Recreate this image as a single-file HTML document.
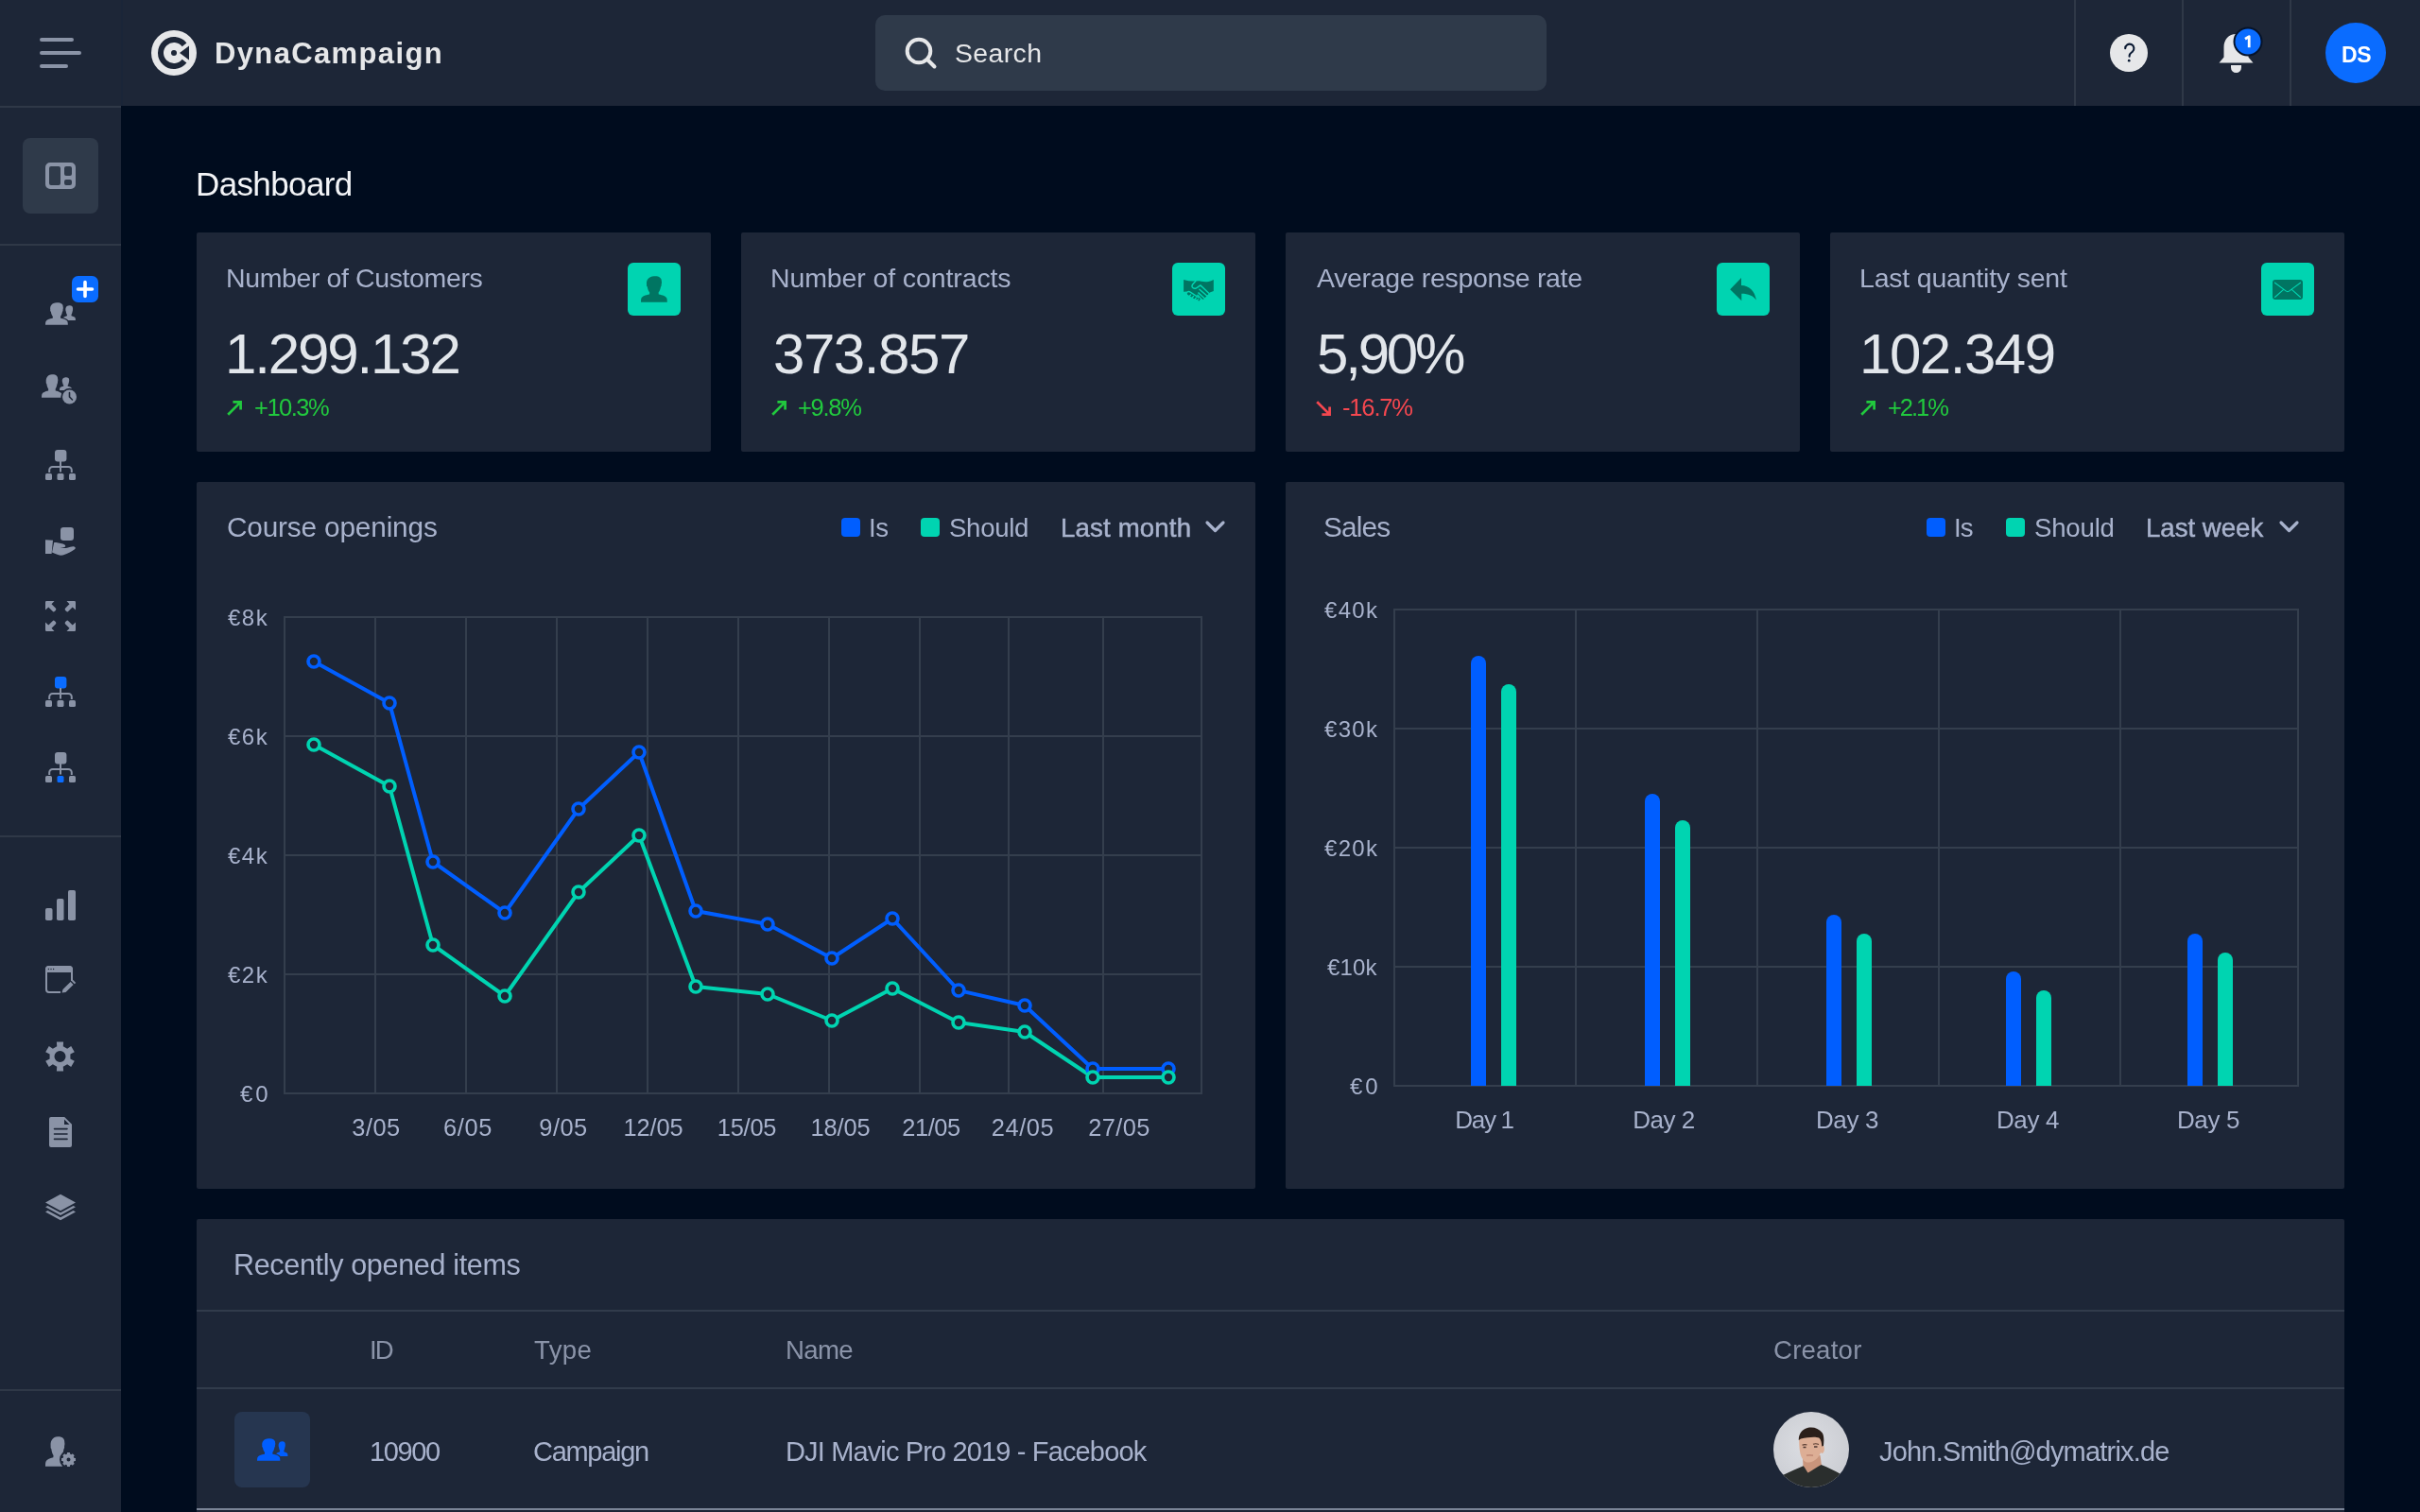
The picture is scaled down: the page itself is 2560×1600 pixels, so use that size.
<!DOCTYPE html>
<html><head><meta charset="utf-8">
<style>
*{margin:0;padding:0;box-sizing:border-box}
html,body{width:2560px;height:1600px;overflow:hidden;background:#000C1E;font-family:"Liberation Sans",sans-serif}
.a{position:absolute}
.t{position:absolute;white-space:nowrap;line-height:1;will-change:transform}
#sidebar{left:0;top:0;width:128px;height:1600px;background:#1D2637}
#header{left:128px;top:0;width:2432px;height:112px;background:#1D2637}
.sep{position:absolute;background:#2F3847}
.card{position:absolute;background:#1D2637;border-radius:2px}
</style></head>
<body>
<!-- SIDEBAR -->
<div id="sidebar" class="a"></div>
<div class="a" style="left:128px;top:0;width:2px;height:112px;background:#1A2538"></div>
<div class="sep" style="left:0;top:112px;width:128px;height:2px"></div>
<div class="sep" style="left:0;top:258px;width:128px;height:2px"></div>
<div class="sep" style="left:0;top:884px;width:128px;height:2px"></div>
<div class="sep" style="left:0;top:1470px;width:128px;height:2px"></div>
<!-- hamburger -->
<div class="a" style="left:42px;top:40px;width:36px;height:4px;border-radius:2px;background:#8A93A6"></div>
<div class="a" style="left:42px;top:54px;width:44px;height:4px;border-radius:2px;background:#8A93A6"></div>
<div class="a" style="left:42px;top:68px;width:30px;height:4px;border-radius:2px;background:#8A93A6"></div>
<!-- active tile -->
<div class="a" style="left:24px;top:146px;width:80px;height:80px;border-radius:8px;background:#2F3A4A"></div>
<svg class="a" style="left:0;top:0" width="128" height="1600" viewBox="0 0 128 1600">
  <g fill="#8A93A6">
    <!-- dashboard icon -->
    <path transform="translate(66.5,323.0) scale(0.4821,0.5714)" d="M14 0.3C19 0 22 2 21.8 5.5C22.2 6.5 22 8 21.6 9C21.8 10 21.6 11 21 11.5C20.5 14.5 19.5 16.5 18.6 17.5L18.8 19.5C23 20.3 26.5 21.5 27.3 23.5C27.7 24.5 27.8 26 27.8 27.8H0C0 26 .1 24.5 .5 23.5C1.3 21.5 4.8 20.3 9 19.5L9.2 17.5C8.3 16.5 7.2 14.5 6.8 11.5C6.1 11 5.8 10 6.1 9C5.8 7.5 6 5 7.2 3.5C8.5 1.5 11 .5 14 .3Z"/><path stroke="#1D2637" stroke-width="2.6" paint-order="stroke" transform="translate(48.0,320.0) scale(0.8571,0.8571)" d="M14 0.3C19 0 22 2 21.8 5.5C22.2 6.5 22 8 21.6 9C21.8 10 21.6 11 21 11.5C20.5 14.5 19.5 16.5 18.6 17.5L18.8 19.5C23 20.3 26.5 21.5 27.3 23.5C27.7 24.5 27.8 26 27.8 27.8H0C0 26 .1 24.5 .5 23.5C1.3 21.5 4.8 20.3 9 19.5L9.2 17.5C8.3 16.5 7.2 14.5 6.8 11.5C6.1 11 5.8 10 6.1 9C5.8 7.5 6 5 7.2 3.5C8.5 1.5 11 .5 14 .3Z"/><rect x="75" y="291" width="30" height="30" rx="7.5" fill="#1D2637"/><rect x="76" y="292" width="28" height="28" rx="6.5" fill="#0A6CFF"/><path d="M90 298.5v15 M82.5 306h15" stroke="#fff" stroke-width="3.6" stroke-linecap="round"/><path transform="translate(63.0,399.0) scale(0.4643,0.5000)" d="M14 0.3C19 0 22 2 21.8 5.5C22.2 6.5 22 8 21.6 9C21.8 10 21.6 11 21 11.5C20.5 14.5 19.5 16.5 18.6 17.5L18.8 19.5C23 20.3 26.5 21.5 27.3 23.5C27.7 24.5 27.8 26 27.8 27.8H0C0 26 .1 24.5 .5 23.5C1.3 21.5 4.8 20.3 9 19.5L9.2 17.5C8.3 16.5 7.2 14.5 6.8 11.5C6.1 11 5.8 10 6.1 9C5.8 7.5 6 5 7.2 3.5C8.5 1.5 11 .5 14 .3Z"/><path stroke="#1D2637" stroke-width="2.6" paint-order="stroke" transform="translate(44.0,396.0) scale(0.7857,0.8929)" d="M14 0.3C19 0 22 2 21.8 5.5C22.2 6.5 22 8 21.6 9C21.8 10 21.6 11 21 11.5C20.5 14.5 19.5 16.5 18.6 17.5L18.8 19.5C23 20.3 26.5 21.5 27.3 23.5C27.7 24.5 27.8 26 27.8 27.8H0C0 26 .1 24.5 .5 23.5C1.3 21.5 4.8 20.3 9 19.5L9.2 17.5C8.3 16.5 7.2 14.5 6.8 11.5C6.1 11 5.8 10 6.1 9C5.8 7.5 6 5 7.2 3.5C8.5 1.5 11 .5 14 .3Z"/><circle cx="73.5" cy="420" r="9.2" fill="#1D2637"/><circle cx="73.5" cy="420" r="7.5" fill="#8A93A6"/><path d="M73.5 415.5v4.5l3 3" fill="none" stroke="#1D2637" stroke-width="1.6" stroke-linecap="round"/><rect x="58" y="476" width="12.4" height="12.5" rx="3" fill="#8A93A6"/><path d="M64 488 v11.5 M52.2 500 v-2.5 a3.5 3.5 0 0 1 3.5 -3.5 h16.6 a3.5 3.5 0 0 1 3.5 3.5 v2.5" fill="none" stroke="#8A93A6" stroke-width="2"/><rect x="48" y="501" width="7" height="7" rx="1.6"/><rect x="60.5" y="501" width="7" height="7" rx="1.6" fill="#8A93A6"/><rect x="73" y="501" width="7" height="7" rx="1.6"/><rect x="64" y="558" width="14" height="14" rx="3.2"/><path d="M48 571.2 L56 571.8 L54.6 586 L48 586z"/><path d="M57.2 574 C60 574 63.5 574.6 66.5 575.6 C70 576.7 70.3 579.2 67 579.3 L63.5 579.5 C66 580 68 580.2 71 579.7 C74 579 76.5 578 78.5 578.5 C80 579 80.2 580.2 79 581.3 C76 583.5 71 586.5 66.5 587.5 C63.5 588 60 587 55 584.5z"/><path transform="translate(48,636) scale(1,1)" d="M0 1.2 a1.2 1.2 0 0 1 1.2 -1.2 h8.3 l-3 3.3 4.3 4.3 a1.6 1.6 0 0 1 0 2.3 l-.9.9 a1.6 1.6 0 0 1 -2.3 0 l-4.300-4.300 -3.300 3z"/><path transform="translate(80,636) scale(-1,1)" d="M0 1.2 a1.2 1.2 0 0 1 1.2 -1.2 h8.3 l-3 3.3 4.3 4.3 a1.6 1.6 0 0 1 0 2.3 l-.9.9 a1.6 1.6 0 0 1 -2.3 0 l-4.300-4.300 -3.300 3z"/><path transform="translate(48,668) scale(1,-1)" d="M0 1.2 a1.2 1.2 0 0 1 1.2 -1.2 h8.3 l-3 3.3 4.3 4.3 a1.6 1.6 0 0 1 0 2.3 l-.9.9 a1.6 1.6 0 0 1 -2.3 0 l-4.300-4.300 -3.300 3z"/><path transform="translate(80,668) scale(-1,-1)" d="M0 1.2 a1.2 1.2 0 0 1 1.2 -1.2 h8.3 l-3 3.3 4.3 4.3 a1.6 1.6 0 0 1 0 2.3 l-.9.9 a1.6 1.6 0 0 1 -2.3 0 l-4.300-4.300 -3.300 3z"/><rect x="58" y="716" width="12.4" height="12.5" rx="3" fill="#0A6CFF"/><path d="M64 728 v11.5 M52.2 740 v-2.5 a3.5 3.5 0 0 1 3.5 -3.5 h16.6 a3.5 3.5 0 0 1 3.5 3.5 v2.5" fill="none" stroke="#8A93A6" stroke-width="2"/><rect x="48" y="741" width="7" height="7" rx="1.6"/><rect x="60.5" y="741" width="7" height="7" rx="1.6" fill="#8A93A6"/><rect x="73" y="741" width="7" height="7" rx="1.6"/><rect x="58" y="796" width="12.4" height="12.5" rx="3" fill="#8A93A6"/><path d="M64 808 v11.5 M52.2 820 v-2.5 a3.5 3.5 0 0 1 3.5 -3.5 h16.6 a3.5 3.5 0 0 1 3.5 3.5 v2.5" fill="none" stroke="#8A93A6" stroke-width="2"/><rect x="48" y="821" width="7" height="7" rx="1.6"/><rect x="60.5" y="821" width="7" height="7" rx="1.6" fill="#0A6CFF"/><rect x="73" y="821" width="7" height="7" rx="1.6"/><rect x="48" y="961" width="7.5" height="13" rx="1.8"/><rect x="60" y="951" width="7.5" height="23" rx="1.8"/><rect x="72" y="942" width="8" height="32" rx="1.8"/><path d="M64 1050 H52 a3 3 0 0 1 -3 -3 V1026 a3 3 0 0 1 3 -3 H73 a3 3 0 0 1 3 3 V1038" fill="none" stroke="#8A93A6" stroke-width="2"/><path d="M48 1029 V1026 a4 4 0 0 1 4 -4 H73 a4 4 0 0 1 4 4 V1029z"/><circle cx="51.4" cy="1025.5" r=".7" fill="#1D2637"/><circle cx="54" cy="1025.5" r=".7" fill="#1D2637"/><circle cx="56.6" cy="1025.5" r=".7" fill="#1D2637"/><path d="M65.5 1050.5 L66.5 1047 L74.600 1039 L77.600 1042 L69.500 1050 Z M75.600 1038 L77 1036.800 L80.200 1040 L78.800 1041.200 Z"/><path fill-rule="evenodd" d="M59.90 1102.41 L67.10 1102.41 L66.77 1107.29 L71.14 1109.81 L75.20 1107.09 L78.80 1113.32 L74.41 1115.48 L74.41 1120.52 L78.80 1122.68 L75.20 1128.91 L71.14 1126.19 L66.77 1128.71 L67.10 1133.59 L59.90 1133.59 L60.23 1128.71 L55.86 1126.19 L51.80 1128.91 L48.20 1122.68 L52.59 1120.52 L52.59 1115.48 L48.20 1113.32 L51.80 1107.09 L55.86 1109.81 L60.23 1107.29Z M69.5 1118 a6 6 0 1 0 -12 0 a6 6 0 1 0 12 0z"/><path fill-rule="evenodd" d="M54 1182 H68.2 L76 1189.800 V1212 a2 2 0 0 1 -2 2 H54 a2 2 0 0 1 -2 -2 V1184 a2 2 0 0 1 2 -2z M68 1184.500 V1190 H73.500z"/><path d="M57.500 1194.600 H71 M57.500 1200 H71 M57.500 1205.400 H71" stroke="#1D2637" stroke-width="1.6" stroke-linecap="round"/><path d="M64 1263.800 L80 1272.500 L64 1281.200 L48 1272.500z"/><path d="M50.500 1275.900 L64 1283.200 L77.500 1275.900 L80 1277.300 L64 1286 L48 1277.300z"/><path d="M50.500 1281 L64 1288.300 L77.500 1281 L80 1282.400 L64 1291.200 L48 1282.400z"/><path transform="translate(48,1520) scale(0.9286,1.1429)" d="M14 0.3C19 0 22 2 21.8 5.5C22.2 6.5 22 8 21.6 9C21.8 10 21.6 11 21 11.5C20.5 14.5 19.5 16.5 18.6 17.5L18.8 19.5C23 20.3 26.5 21.5 27.3 23.5C27.7 24.5 27.8 26 27.8 27.8H0C0 26 .1 24.5 .5 23.5C1.3 21.5 4.8 20.3 9 19.5L9.2 17.5C8.3 16.5 7.2 14.5 6.8 11.5C6.1 11 5.8 10 6.1 9C5.8 7.5 6 5 7.2 3.5C8.5 1.5 11 .5 14 .3Z"/><circle cx="72.5" cy="1544.5" r="9.500" fill="#1D2637"/><path fill-rule="evenodd" d="M79.96 1543.05 L79.96 1545.95 L78.52 1546.00 L77.81 1547.69 L78.80 1548.75 L76.75 1550.80 L75.69 1549.81 L74.00 1550.52 L73.95 1551.96 L71.05 1551.96 L71.00 1550.52 L69.31 1549.81 L68.25 1550.80 L66.20 1548.75 L67.19 1547.69 L66.48 1546.00 L65.04 1545.95 L65.04 1543.05 L66.48 1543.00 L67.19 1541.31 L66.20 1540.25 L68.25 1538.20 L69.31 1539.19 L71.00 1538.48 L71.05 1537.04 L73.95 1537.04 L74.00 1538.48 L75.69 1539.19 L76.75 1538.20 L78.80 1540.25 L77.81 1541.31 L78.52 1543.00Z M74.5 1544.5 a2 2 0 1 0 -4 0 a2 2 0 1 0 4 0z"/>
    <path fill-rule="evenodd" d="M53 172h22a5 5 0 0 1 5 5v18a5 5 0 0 1-5 5h-22a5 5 0 0 1-5-5v-18a5 5 0 0 1 5-5z M54 176h8a2 2 0 0 1 2 2v16a2 2 0 0 1-2 2h-8a2 2 0 0 1-2-2v-16a2 2 0 0 1 2-2z M70 176h4a2 2 0 0 1 2 2v6a2 2 0 0 1-2 2h-4a2 2 0 0 1-2-2v-6a2 2 0 0 1 2-2z M70 190h4a2 2 0 0 1 2 2v2a2 2 0 0 1-2 2h-4a2 2 0 0 1-2-2v-2a2 2 0 0 1 2-2z"/>
  </g>
</svg>
<!-- HEADER -->
<div id="header" class="a"></div>
<div class="a" style="left:128px;top:0;width:2px;height:112px;background:#1A2538"></div>
<svg class="a" style="left:160px;top:32px" width="48" height="48" viewBox="0 0 48 48">
  <circle cx="24" cy="24" r="24" fill="#E6E7E9"/>
  <path d="M35.03 15.38 A14 14 0 1 0 35.03 32.62" fill="none" stroke="#1D2637" stroke-width="6"/>
  <circle cx="24" cy="24" r="3" fill="#1D2637"/>
  <path d="M30 24 L40 16.5 L40 31.5 Z" fill="#1D2637"/>
</svg>
<div class="t" id="brand" style="left:227.00px;top:41px;font-size:31px;font-weight:bold;color:#E6E7E9;letter-spacing:1.364px">DynaCampaign</div>
<div class="a" style="left:926px;top:16px;width:710px;height:80px;border-radius:10px;background:#2F3A4A"></div>
<svg class="a" style="left:956px;top:38px" width="36" height="36" viewBox="0 0 36 36">
  <circle cx="16" cy="16" r="12.3" fill="none" stroke="#E6E7E9" stroke-width="4"/>
  <path d="M25 25 L32.5 32.5" stroke="#E6E7E9" stroke-width="4" stroke-linecap="round"/>
</svg>
<div class="t" id="search" style="left:1010.00px;top:42px;font-size:28.4px;color:#E6E7E9;letter-spacing:0.400px">Search</div>
<div class="sep" style="left:2194px;top:0;width:2px;height:112px"></div>
<div class="sep" style="left:2308px;top:0;width:2px;height:112px"></div>
<div class="sep" style="left:2422px;top:0;width:2px;height:112px"></div>
<svg class="a" style="left:2232px;top:36px" width="40" height="40" viewBox="0 0 40 40">
  <circle cx="20" cy="20" r="20" fill="#E6E7E9"/>
  <path d="M16.2 15.2 a4.6 4.6 0 1 1 7.6 3.5 c-1.5 1.2 -3.2 2.1 -3.2 4.2 v0.9" fill="none" stroke="#0B1A33" stroke-width="2.1" stroke-linecap="round"/>
  <circle cx="20.2" cy="28.2" r="1.35" fill="#0B1A33"/>
</svg>
<svg class="a" style="left:2340px;top:24px" width="60" height="56" viewBox="0 0 60 56">
  <path d="M25.5 12 c-8 0 -13 6 -13 14 v10.5 l-5 6 h36 l-5 -6 v-10.5 c0 -8 -5 -14 -13 -14z" fill="#E6E7E9"/>
  <path d="M20 45 h11 v2.5 a5.5 5.5 0 0 1 -11 0z" fill="#E6E7E9"/>
  <circle cx="38" cy="20" r="15.5" fill="#06132A"/>
  <circle cx="38" cy="20" r="13.5" fill="#0A6CFF"/>
  <path d="M35 17.2 L39.2 14.6 V26.2" fill="none" stroke="#fff" stroke-width="2.8" stroke-linejoin="round"/>
</svg>
<div class="a" style="left:2460px;top:24px;width:64px;height:64px;border-radius:50%;background:#0A6CFF"></div>
<div class="t" id="ds" style="left:2476.50px;top:46.5px;font-size:23px;font-weight:bold;color:#fff;letter-spacing:-0.400px">DS</div>

<!-- PAGE TITLE -->
<div class="t" id="title" style="left:207.00px;top:177px;font-size:35px;color:#F2F4F7;letter-spacing:-0.625px">Dashboard</div>
<!-- STAT CARDS -->
<div class="card" style="left:208px;top:246px;width:544px;height:232px"></div>
<div class="t lbl" style="left:239.00px;top:280px;font-size:28.5px;color:#A8B2CC;letter-spacing:-0.389px">Number of Customers</div>
<div class="a" style="left:664px;top:278px;width:56px;height:56px;border-radius:6px;background:#00D4B1"></div>
<svg class="a" style="left:676px;top:290px" width="32" height="32" viewBox="0 0 32 32" fill="#007562"><path transform="translate(2,2) scale(1,1)" d="M14 0.3C19 0 22 2 21.8 5.5C22.2 6.5 22 8 21.6 9C21.8 10 21.6 11 21 11.5C20.5 14.5 19.5 16.5 18.6 17.5L18.8 19.5C23 20.3 26.5 21.5 27.3 23.5C27.7 24.5 27.8 26 27.8 27.8H0C0 26 .1 24.5 .5 23.5C1.3 21.5 4.8 20.3 9 19.5L9.2 17.5C8.3 16.5 7.2 14.5 6.8 11.5C6.1 11 5.8 10 6.1 9C5.8 7.5 6 5 7.2 3.5C8.5 1.5 11 .5 14 .3Z"/></svg>
<div class="t num" style="left:238.00px;top:345px;font-size:60px;color:#E2E6EB;letter-spacing:-2.125px">1.299.132</div>
<svg class="a" style="left:240px;top:424px" width="16" height="16" viewBox="0 0 16 16"><path d="M1.2 14.8 L14.6 1.4 M6.4 1.4 H14.6 V9.6" fill="none" stroke="#21C93E" stroke-width="2.7"/></svg>
<div class="t chg" style="left:268.50px;top:418.5px;font-size:25.5px;color:#21C93E;letter-spacing:-1.500px">+10.3%</div>
<div class="card" style="left:784px;top:246px;width:544px;height:232px"></div>
<div class="t lbl" style="left:815.00px;top:280px;font-size:28.5px;color:#A8B2CC;letter-spacing:-0.111px">Number of contracts</div>
<div class="a" style="left:1240px;top:278px;width:56px;height:56px;border-radius:6px;background:#00D4B1"></div>
<svg class="a" style="left:1252px;top:290px" width="32" height="32" viewBox="0 0 32 32" fill="#007562"><path d="M0.1 5.9 Q6 7.7 12.5 7.4 L17 7.3 Q22 8.9 26.5 8 Q29 7.3 31.8 5.9 V18 L27.8 19.4 L21.5 26.5 L16.5 28.2 L13 27.2 L4.2 21.8 Q3.6 20 3.4 18.6 L0.1 18.7 Z"/><g fill="none" stroke="#00D4B1" stroke-width="1.45" stroke-linecap="round" stroke-linejoin="round"><path d="M12.8 7.6 L9.8 10.8 Q8.5 12.4 9.3 13.9 Q10.4 15.7 12.7 15.2 Q13.6 15 14.4 14.3 L17.8 11.9 L28.6 22"/><path d="M16.9 16.3 L25.6 23.8"/><path d="M15.8 19.9 L22.3 25.8"/><path d="M14.9 22.2 L19.8 27.6"/><path d="M3.2 19.8 Q5 17.6 7.2 19.2 L15.6 24.6"/><path d="M7.6 21.9 L6.2 23.4"/><path d="M10.6 23.4 L9.1 25.2"/><path d="M13.3 25.1 L11.8 27"/><path d="M15.6 26.5 L14.5 28.5"/></g><rect x="0" y="26.8" width="32" height="6" fill="#00D4B1"/><circle cx="16.3" cy="27.4" r="0.9"/></svg>
<div class="t num" style="left:817.50px;top:345px;font-size:60px;color:#E2E6EB;letter-spacing:-1.432px">373.857</div>
<svg class="a" style="left:816px;top:424px" width="16" height="16" viewBox="0 0 16 16"><path d="M1.2 14.8 L14.6 1.4 M6.4 1.4 H14.6 V9.6" fill="none" stroke="#21C93E" stroke-width="2.7"/></svg>
<div class="t chg" style="left:844.40px;top:418.5px;font-size:25.5px;color:#21C93E;letter-spacing:-1.275px">+9.8%</div>
<div class="card" style="left:1360px;top:246px;width:544px;height:232px"></div>
<div class="t lbl" style="left:1392.70px;top:280px;font-size:28.5px;color:#A8B2CC;letter-spacing:-0.340px">Average response rate</div>
<div class="a" style="left:1816px;top:278px;width:56px;height:56px;border-radius:6px;background:#00D4B1"></div>
<svg class="a" style="left:1828px;top:290px" width="32" height="32" viewBox="0 0 32 32" fill="#007562"><path d="M14 4.1 V11.9 C22.5 12.3 28.3 17.5 29.9 27.6 C26.5 22.8 21.5 20.9 14.3 20.8 V28.2 L2.2 16.2 Z"/></svg>
<div class="t num" style="left:1393.30px;top:345px;font-size:60px;color:#E2E6EB;letter-spacing:-3.200px">5,90%</div>
<svg class="a" style="left:1392px;top:424px" width="16" height="16" viewBox="0 0 16 16"><path d="M1.2 1.2 L14.6 14.6 M6.4 14.6 H14.6 V6.4" fill="none" stroke="#F5474F" stroke-width="2.7"/></svg>
<div class="t chg" style="left:1420.00px;top:418.5px;font-size:25.5px;color:#F5474F;letter-spacing:-1.160px">-16.7%</div>
<div class="card" style="left:1936px;top:246px;width:544px;height:232px"></div>
<div class="t lbl" style="left:1967.00px;top:280px;font-size:28.5px;color:#A8B2CC;letter-spacing:-0.206px">Last quantity sent</div>
<div class="a" style="left:2392px;top:278px;width:56px;height:56px;border-radius:6px;background:#00D4B1"></div>
<svg class="a" style="left:2404px;top:290px" width="32" height="32" viewBox="0 0 32 32" fill="#007562"><rect x="0" y="6" width="32" height="21" rx="3"/><path d="M2.5 9.2l11.6 8.7c1.1.8 2.6.8 3.7 0l11.7-8.7 M2.5 24.5l8.9-7.8 M29.5 24.5l-8.9-7.8" fill="none" stroke="#00D4B1" stroke-width="1.1" stroke-linecap="round"/></svg>
<div class="t num" style="left:1966.50px;top:345px;font-size:60px;color:#E2E6EB;letter-spacing:-1.464px">102.349</div>
<svg class="a" style="left:1968px;top:424px" width="16" height="16" viewBox="0 0 16 16"><path d="M1.2 14.8 L14.6 1.4 M6.4 1.4 H14.6 V9.6" fill="none" stroke="#21C93E" stroke-width="2.7"/></svg>
<div class="t chg" style="left:1997.10px;top:418.5px;font-size:25.5px;color:#21C93E;letter-spacing:-2.050px">+2.1%</div>
<!-- CHART CARDS -->
<div class="card" style="left:208px;top:510px;width:1120px;height:748px"></div>
<div class="card" style="left:1360px;top:510px;width:1120px;height:748px"></div>
<div class="t" id="co" style="left:240.00px;top:543px;font-size:29.8px;color:#A8B2CC;letter-spacing:-0.179px">Course openings</div>
<div class="a" style="left:890px;top:548px;width:20px;height:20px;border-radius:4px;background:#005EFF"></div>
<div class="t" style="left:918.50px;top:544.6px;font-size:27.6px;color:#A8B2CC;letter-spacing:-0.500px">Is</div>
<div class="a" style="left:974px;top:548px;width:20px;height:20px;border-radius:4px;background:#00D4B1"></div>
<div class="t" style="left:1004.00px;top:544.6px;font-size:27.6px;color:#A8B2CC;letter-spacing:-0.300px">Should</div>
<div class="t" style="left:1122.00px;top:544.6px;font-size:27.6px;color:#A8B2CC;-webkit-text-stroke:0.5px #A8B2CC;letter-spacing:0.167px">Last month</div>
<svg class="a" style="left:1274px;top:550px" width="24" height="16" viewBox="0 0 24 16"><path d="M3 3 L11.5 11.5 L20 3" fill="none" stroke="#A8B2CC" stroke-width="3.2" stroke-linecap="round" stroke-linejoin="round"/></svg>
<svg class="a" style="left:0;top:0" width="2560" height="1600" viewBox="0 0 2560 1600">
<g stroke="#343E4D" stroke-width="2" fill="none"><line x1="300" y1="653" x2="1272" y2="653"/><line x1="300" y1="779" x2="1272" y2="779"/><line x1="300" y1="905" x2="1272" y2="905"/><line x1="300" y1="1031" x2="1272" y2="1031"/><line x1="300" y1="1157" x2="1272" y2="1157"/><line x1="301" y1="652" x2="301" y2="1158"/><line x1="397" y1="652" x2="397" y2="1158"/><line x1="493" y1="652" x2="493" y2="1158"/><line x1="589" y1="652" x2="589" y2="1158"/><line x1="685" y1="652" x2="685" y2="1158"/><line x1="781" y1="652" x2="781" y2="1158"/><line x1="877" y1="652" x2="877" y2="1158"/><line x1="973" y1="652" x2="973" y2="1158"/><line x1="1067" y1="652" x2="1067" y2="1158"/><line x1="1167" y1="652" x2="1167" y2="1158"/><line x1="1271" y1="652" x2="1271" y2="1158"/></g>
<polyline points="332,700 412,744 458,912 534,966 612,856 676,796 736,964 812,978 880,1014 944,972 1014,1048 1084,1064 1156,1131 1236,1131" fill="none" stroke="#005EFF" stroke-width="4" stroke-linejoin="round"/>
<polyline points="332,788 412,832 458,1000 534,1054 612,944 676,884 736,1044 812,1052 880,1080 944,1046 1014,1082 1084,1092 1156,1140 1236,1140" fill="none" stroke="#00D4B1" stroke-width="4" stroke-linejoin="round"/>
<circle cx="332" cy="700" r="6" fill="#1D2637" stroke="#005EFF" stroke-width="3.6"/><circle cx="412" cy="744" r="6" fill="#1D2637" stroke="#005EFF" stroke-width="3.6"/><circle cx="458" cy="912" r="6" fill="#1D2637" stroke="#005EFF" stroke-width="3.6"/><circle cx="534" cy="966" r="6" fill="#1D2637" stroke="#005EFF" stroke-width="3.6"/><circle cx="612" cy="856" r="6" fill="#1D2637" stroke="#005EFF" stroke-width="3.6"/><circle cx="676" cy="796" r="6" fill="#1D2637" stroke="#005EFF" stroke-width="3.6"/><circle cx="736" cy="964" r="6" fill="#1D2637" stroke="#005EFF" stroke-width="3.6"/><circle cx="812" cy="978" r="6" fill="#1D2637" stroke="#005EFF" stroke-width="3.6"/><circle cx="880" cy="1014" r="6" fill="#1D2637" stroke="#005EFF" stroke-width="3.6"/><circle cx="944" cy="972" r="6" fill="#1D2637" stroke="#005EFF" stroke-width="3.6"/><circle cx="1014" cy="1048" r="6" fill="#1D2637" stroke="#005EFF" stroke-width="3.6"/><circle cx="1084" cy="1064" r="6" fill="#1D2637" stroke="#005EFF" stroke-width="3.6"/><circle cx="1156" cy="1131" r="6" fill="#1D2637" stroke="#005EFF" stroke-width="3.6"/><circle cx="1236" cy="1131" r="6" fill="#1D2637" stroke="#005EFF" stroke-width="3.6"/>
<circle cx="332" cy="788" r="6" fill="#1D2637" stroke="#00D4B1" stroke-width="3.6"/><circle cx="412" cy="832" r="6" fill="#1D2637" stroke="#00D4B1" stroke-width="3.6"/><circle cx="458" cy="1000" r="6" fill="#1D2637" stroke="#00D4B1" stroke-width="3.6"/><circle cx="534" cy="1054" r="6" fill="#1D2637" stroke="#00D4B1" stroke-width="3.6"/><circle cx="612" cy="944" r="6" fill="#1D2637" stroke="#00D4B1" stroke-width="3.6"/><circle cx="676" cy="884" r="6" fill="#1D2637" stroke="#00D4B1" stroke-width="3.6"/><circle cx="736" cy="1044" r="6" fill="#1D2637" stroke="#00D4B1" stroke-width="3.6"/><circle cx="812" cy="1052" r="6" fill="#1D2637" stroke="#00D4B1" stroke-width="3.6"/><circle cx="880" cy="1080" r="6" fill="#1D2637" stroke="#00D4B1" stroke-width="3.6"/><circle cx="944" cy="1046" r="6" fill="#1D2637" stroke="#00D4B1" stroke-width="3.6"/><circle cx="1014" cy="1082" r="6" fill="#1D2637" stroke="#00D4B1" stroke-width="3.6"/><circle cx="1084" cy="1092" r="6" fill="#1D2637" stroke="#00D4B1" stroke-width="3.6"/><circle cx="1156" cy="1140" r="6" fill="#1D2637" stroke="#00D4B1" stroke-width="3.6"/><circle cx="1236" cy="1140" r="6" fill="#1D2637" stroke="#00D4B1" stroke-width="3.6"/>
<g stroke="#343E4D" stroke-width="2" fill="none"><line x1="1474" y1="645" x2="2432" y2="645"/><line x1="1474" y1="771" x2="2432" y2="771"/><line x1="1474" y1="897" x2="2432" y2="897"/><line x1="1474" y1="1023" x2="2432" y2="1023"/><line x1="1474" y1="1149" x2="2432" y2="1149"/><line x1="1475" y1="644" x2="1475" y2="1150"/><line x1="1667" y1="644" x2="1667" y2="1150"/><line x1="1859" y1="644" x2="1859" y2="1150"/><line x1="2051" y1="644" x2="2051" y2="1150"/><line x1="2243" y1="644" x2="2243" y2="1150"/><line x1="2431" y1="644" x2="2431" y2="1150"/></g>
<path d="M1556 1149 V702 a8 8 0 0 1 16 0 V1149z" fill="#005EFF"/><path d="M1588 1149 V732 a8 8 0 0 1 16 0 V1149z" fill="#00D4B1"/><path d="M1740 1149 V848 a8 8 0 0 1 16 0 V1149z" fill="#005EFF"/><path d="M1772 1149 V876 a8 8 0 0 1 16 0 V1149z" fill="#00D4B1"/><path d="M1932 1149 V976 a8 8 0 0 1 16 0 V1149z" fill="#005EFF"/><path d="M1964 1149 V996 a8 8 0 0 1 16 0 V1149z" fill="#00D4B1"/><path d="M2122 1149 V1036 a8 8 0 0 1 16 0 V1149z" fill="#005EFF"/><path d="M2154 1149 V1056 a8 8 0 0 1 16 0 V1149z" fill="#00D4B1"/><path d="M2314 1149 V996 a8 8 0 0 1 16 0 V1149z" fill="#005EFF"/><path d="M2346 1149 V1016 a8 8 0 0 1 16 0 V1149z" fill="#00D4B1"/>
</svg>
<div class="t" style="right:2276.00px;top:641.68px;font-size:24px;color:#A8B2CC;letter-spacing:1.500px">€8k</div>
<div class="t" style="right:2276.00px;top:767.68px;font-size:24px;color:#A8B2CC;letter-spacing:1.500px">€6k</div>
<div class="t" style="right:2276.00px;top:893.68px;font-size:24px;color:#A8B2CC;letter-spacing:1.500px">€4k</div>
<div class="t" style="right:2276.00px;top:1019.68px;font-size:24px;color:#A8B2CC;letter-spacing:1.500px">€2k</div>
<div class="t" style="right:2273.00px;top:1145.68px;font-size:24px;color:#A8B2CC;letter-spacing:3.000px">€0</div>
<div class="t" style="left:297.75px;width:200px;text-align:center;top:1180.5px;font-size:25.4px;color:#A8B2CC;letter-spacing:0.502px">3/05</div>
<div class="t" style="left:395.00px;width:200px;text-align:center;top:1180.5px;font-size:25.4px;color:#A8B2CC;letter-spacing:0.666px">6/05</div>
<div class="t" style="left:495.75px;width:200px;text-align:center;top:1180.5px;font-size:25.4px;color:#A8B2CC;letter-spacing:0.502px">9/05</div>
<div class="t" style="left:591.00px;width:200px;text-align:center;top:1180.5px;font-size:25.4px;color:#A8B2CC;letter-spacing:-0.125px">12/05</div>
<div class="t" style="left:690.00px;width:200px;text-align:center;top:1180.5px;font-size:25.4px;color:#A8B2CC;letter-spacing:-0.250px">15/05</div>
<div class="t" style="left:789.00px;width:200px;text-align:center;top:1180.5px;font-size:25.4px;color:#A8B2CC;letter-spacing:-0.125px">18/05</div>
<div class="t" style="left:885.00px;width:200px;text-align:center;top:1180.5px;font-size:25.4px;color:#A8B2CC;letter-spacing:-0.375px">21/05</div>
<div class="t" style="left:982.00px;width:200px;text-align:center;top:1180.5px;font-size:25.4px;color:#A8B2CC;letter-spacing:0.625px">24/05</div>
<div class="t" style="left:1083.50px;width:200px;text-align:center;top:1180.5px;font-size:25.4px;color:#A8B2CC;letter-spacing:0.375px">27/05</div>
<div class="t" id="sales" style="left:1400.00px;top:543px;font-size:29.8px;color:#A8B2CC;letter-spacing:-0.875px">Sales</div>
<div class="a" style="left:2038px;top:548px;width:20px;height:20px;border-radius:4px;background:#005EFF"></div>
<div class="t" style="left:2067.00px;top:544.6px;font-size:27.6px;color:#A8B2CC;letter-spacing:-1.000px">Is</div>
<div class="a" style="left:2122px;top:548px;width:20px;height:20px;border-radius:4px;background:#00D4B1"></div>
<div class="t" style="left:2152.00px;top:544.6px;font-size:27.6px;color:#A8B2CC;letter-spacing:-0.200px">Should</div>
<div class="t" style="left:2270.00px;top:544.6px;font-size:27.6px;color:#A8B2CC;-webkit-text-stroke:0.5px #A8B2CC;letter-spacing:0.000px">Last week</div>
<svg class="a" style="left:2410px;top:550px" width="24" height="16" viewBox="0 0 24 16"><path d="M3 3 L11.5 11.5 L20 3" fill="none" stroke="#A8B2CC" stroke-width="3.2" stroke-linecap="round" stroke-linejoin="round"/></svg>
<div class="t" style="right:1102.00px;top:633.68px;font-size:24px;color:#A8B2CC;letter-spacing:1.333px">€40k</div>
<div class="t" style="right:1102.00px;top:759.68px;font-size:24px;color:#A8B2CC;letter-spacing:1.333px">€30k</div>
<div class="t" style="right:1102.00px;top:885.68px;font-size:24px;color:#A8B2CC;letter-spacing:1.333px">€20k</div>
<div class="t" style="right:1102.83px;top:1011.68px;font-size:24px;color:#A8B2CC;letter-spacing:0.167px">€10k</div>
<div class="t" style="right:1099.00px;top:1137.68px;font-size:24px;color:#A8B2CC;letter-spacing:3.000px">€0</div>
<div class="t" style="left:1470.00px;width:200px;text-align:center;top:1172px;font-size:26px;color:#A8B2CC;letter-spacing:-1.250px">Day 1</div>
<div class="t" style="left:1659.50px;width:200px;text-align:center;top:1172px;font-size:26px;color:#A8B2CC;letter-spacing:-0.500px">Day 2</div>
<div class="t" style="left:1853.75px;width:200px;text-align:center;top:1172px;font-size:26px;color:#A8B2CC;letter-spacing:-0.375px">Day 3</div>
<div class="t" style="left:2044.75px;width:200px;text-align:center;top:1172px;font-size:26px;color:#A8B2CC;letter-spacing:-0.375px">Day 4</div>
<div class="t" style="left:2235.75px;width:200px;text-align:center;top:1172px;font-size:26px;color:#A8B2CC;letter-spacing:-0.375px">Day 5</div>
<!-- TABLE -->
<div class="card" style="left:208px;top:1290px;width:2272px;height:320px"></div>
<div class="t" id="recent" style="left:247.00px;top:1322.7px;font-size:30.5px;color:#A8B2CC;letter-spacing:-0.325px">Recently opened items</div>
<div class="sep" style="left:208px;top:1386px;width:2272px;height:2px;background:#313B4B"></div>
<div class="t th" style="left:391.00px;top:1414.6px;font-size:27.6px;color:#8A93A8;letter-spacing:-2.000px">ID</div>
<div class="t th" style="left:565.00px;top:1414.6px;font-size:27.6px;color:#8A93A8;letter-spacing:0.333px">Type</div>
<div class="t th" style="left:831.00px;top:1414.6px;font-size:27.6px;color:#8A93A8;letter-spacing:-0.667px">Name</div>
<div class="t th" style="left:1876.00px;top:1414.6px;font-size:27.6px;color:#8A93A8;letter-spacing:0.220px">Creator</div>
<div class="sep" style="left:208px;top:1468px;width:2272px;height:2px;background:#313B4B"></div>
<div class="a" style="left:248px;top:1494px;width:80px;height:80px;border-radius:8px;background:#263650"></div>
<svg class="a" style="left:272px;top:1522px" width="34" height="24" viewBox="0 0 34 24" fill="#005EFF"><path transform="translate(20,3) scale(0.4464,0.5714)" d="M14 0.3C19 0 22 2 21.8 5.5C22.2 6.5 22 8 21.6 9C21.8 10 21.6 11 21 11.5C20.5 14.5 19.5 16.5 18.6 17.5L18.8 19.5C23 20.3 26.5 21.5 27.3 23.5C27.7 24.5 27.8 26 27.8 27.8H0C0 26 .1 24.5 .5 23.5C1.3 21.5 4.8 20.3 9 19.5L9.2 17.5C8.3 16.5 7.2 14.5 6.8 11.5C6.1 11 5.8 10 6.1 9C5.8 7.5 6 5 7.2 3.5C8.5 1.5 11 .5 14 .3Z"/><path stroke="#263650" stroke-width="2.6" paint-order="stroke" transform="translate(0,0) scale(0.8750,0.8571)" d="M14 0.3C19 0 22 2 21.8 5.5C22.2 6.5 22 8 21.6 9C21.8 10 21.6 11 21 11.5C20.5 14.5 19.5 16.5 18.6 17.5L18.8 19.5C23 20.3 26.5 21.5 27.3 23.5C27.7 24.5 27.8 26 27.8 27.8H0C0 26 .1 24.5 .5 23.5C1.3 21.5 4.8 20.3 9 19.5L9.2 17.5C8.3 16.5 7.2 14.5 6.8 11.5C6.1 11 5.8 10 6.1 9C5.8 7.5 6 5 7.2 3.5C8.5 1.5 11 .5 14 .3Z"/></svg>
<div class="t td" style="left:391.00px;top:1522px;font-size:29px;color:#A8B2CC;letter-spacing:-1.375px">10900</div>
<div class="t td" style="left:564.00px;top:1522px;font-size:29px;color:#A8B2CC;letter-spacing:-1.286px">Campaign</div>
<div class="t td" style="left:831.00px;top:1522px;font-size:29px;color:#A8B2CC;letter-spacing:-0.857px">DJI Mavic Pro 2019 - Facebook</div>
<svg class="a" style="left:1876px;top:1494px" width="80" height="80" viewBox="0 0 80 80">
  <defs><clipPath id="avc"><circle cx="40" cy="40" r="40"/></clipPath>
  <radialGradient id="avbg" cx="0.45" cy="0.45" r="0.65"><stop offset="0" stop-color="#DCDEE3"/><stop offset="1" stop-color="#C9CBD1"/></radialGradient></defs>
  <g clip-path="url(#avc)">
    <rect width="80" height="80" fill="url(#avbg)"/>
    <path d="M31 48 L49.5 46 L51 57 L36.6 66 L31.5 58 Z" fill="#C9957C"/>
    <path d="M27.2 26 C27 38 28 46 31 50 C33 53 35.5 54 38 53.5 C44 52.5 48.5 48 50 43 L51.5 44 C53.5 43.5 54.5 40 53.5 36.5 C53 35 52 35 51.2 35.8 L52 28 C47 24 38 24 27.2 26 Z" fill="#DDAE95"/>
    <path d="M26.8 30 C26.5 24 30 18.5 36 17 C42 15.5 48 17.5 51.5 22 C53.8 25 53.5 31 53 36 L51.2 36.5 C51 32 50 29 48.2 27.5 C44 26 36 27 29 28.5 Z" fill="#2B1F1A"/>
    <path d="M30.5 35.2 Q33 34 35.5 35 M42 34.2 Q45 33.2 48 34.5" stroke="#5A3E33" stroke-width="1.2" fill="none"/><path d="M31.5 37.5 h3 M43 37 h3.5" stroke="#4A3530" stroke-width="1.3"/><path d="M35 46.2 Q38.5 45.5 42 46.2" stroke="#B87F6C" stroke-width="1.2" fill="none"/>
    <path d="M0 80 L0 72 C4 68 8 66.5 11 66.4 C18 63.5 26 59.5 31.7 57.3 C34 60 35 63 36.6 64.6 C41 62 46 58.5 50.6 56 C58 59 65 62.5 70 65.2 C74 67 78 70 80 73 L80 80 Z" fill="#2A2E2D"/>
  </g>
</svg>
<div class="t td" style="left:1988.00px;top:1522px;font-size:29px;color:#A8B2CC;letter-spacing:-0.809px">John.Smith@dymatrix.de</div>
<div class="a" style="left:208px;top:1596px;width:2272px;height:2px;background:#7A8496"></div>
</body></html>
